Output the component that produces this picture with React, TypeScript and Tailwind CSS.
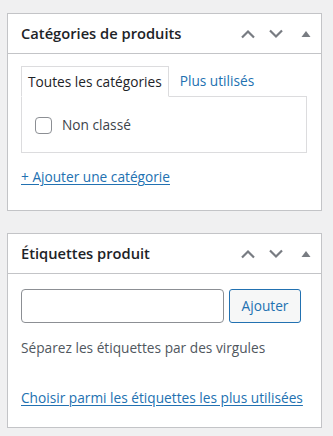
import React from "react"

const font = { fontFamily: '"Open Sans", "Noto Sans", Arial, sans-serif' }

const Handles = () => (
  <div className="flex items-center text-[#787c82]">
    <svg width="16" height="10" viewBox="0 0 16 10" className="mr-[12px]">
      <path d="M2 8.5 L8 2.5 L14 8.5" fill="none" stroke="currentColor" strokeWidth="2.2" />
    </svg>
    <svg width="16" height="10" viewBox="0 0 16 10" className="mr-[17px]">
      <path d="M2 1.5 L8 7.5 L14 1.5" fill="none" stroke="currentColor" strokeWidth="2.2" />
    </svg>
    <svg width="10" height="7" viewBox="0 0 10 7" className="mr-[10px]">
      <path d="M0.5 7 L5 1 L9.5 7 Z" fill="currentColor" />
    </svg>
  </div>
)

const BoxHeader = ({ title }: { title: string }) => (
  <div className="flex h-[40px] items-center justify-between border-b border-[#c3c4c7] pl-[13px]">
    <h2 className="text-[14.7px] font-semibold leading-none text-[#1d2327]">{title}</h2>
    <Handles />
  </div>
)

export default function App() {
  return (
    <div className="min-h-[436px] bg-[#f0f0f1] px-[7px] pt-[13px]" style={font}>
      <div className="w-[315px] border border-[#c3c4c7] bg-white">
        <BoxHeader title="Catégories de produits" />
        <div className="px-[13px] pt-[11px] pb-[24px] text-[13.7px] leading-[18px]">
          <div className="flex items-end">
            <div className="relative z-10 -mb-px flex h-[31px] items-center border border-b-white border-[#dcdcde] bg-white px-[6px] text-[#1d2327]">
              Toutes les catégories
            </div>
            <div className="flex h-[31px] items-center px-[11px] text-[#2271b1]">Plus utilisés</div>
          </div>
          <div className="mr-[1px] h-[57px] border border-[#dcdcde] bg-white pl-[13px] pt-[19px]">
            <label className="flex items-center text-[#3c434a]">
              <span className="mr-[10px] h-[17px] w-[17px] rounded-[4px] border border-[#8c8f94] bg-white" />
              Non classé
            </label>
          </div>
          <a className="mt-[15px] block text-[#2271b1] underline underline-offset-2" href="#">
            + Ajouter une catégorie
          </a>
        </div>
      </div>

      <div className="mt-[22px] w-[315px] border border-[#c3c4c7] bg-white">
        <BoxHeader title="Étiquettes produit" />
        <div className="px-[13px] pt-[15px] pb-[20px] text-[13.7px] leading-[18px]">
          <div className="flex">
            <div className="h-[34px] w-[203px] rounded-[4px] border border-[#8c8f94] bg-white" />
            <button className="ml-[5px] h-[34px] w-[72px] rounded-[3px] border border-[#2271b1] bg-[#f6f7f7] text-[13.7px] text-[#2271b1]">
              Ajouter
            </button>
          </div>
          <p className="mt-[16px] text-[#50575e]">Séparez les étiquettes par des virgules</p>
          <a className="mt-[32px] block text-[#2271b1] underline underline-offset-2" href="#">
            Choisir parmi les étiquettes les plus utilisées
          </a>
        </div>
      </div>
    </div>
  )
}
